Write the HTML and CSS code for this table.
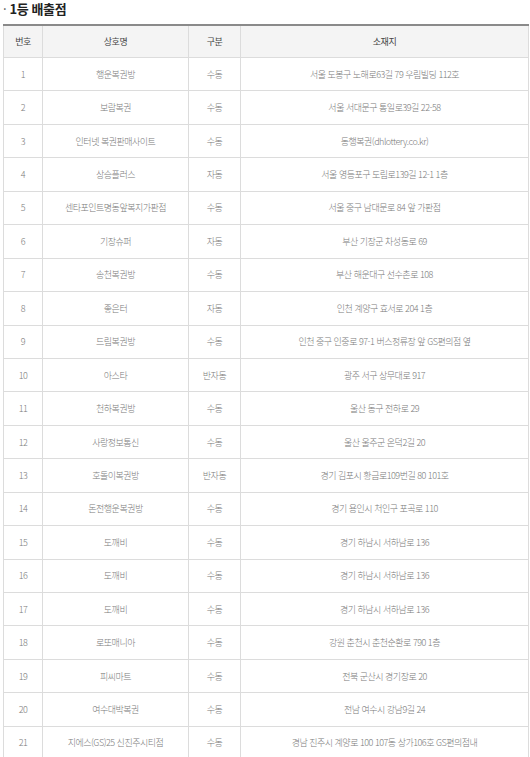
FILE: index.html
```html
<!DOCTYPE html>
<html lang="ko">
<head>
<meta charset="utf-8">
<link rel="stylesheet" href="styles.css">
</head>
<body>
<div class="wrap">
  <h3 class="title"><span class="dot">·</span> 1등 배출점</h3>
  <table class="tbl">
    <colgroup>
      <col class="c1"><col class="c2"><col class="c3"><col class="c4">
    </colgroup>
    <thead>
      <tr><th>번호</th><th>상호명</th><th>구분</th><th>소재지</th></tr>
    </thead>
    <tbody>
      <tr><td>1</td><td>행운복권방</td><td>수동</td><td>서울 도봉구 노해로63길 79 우림빌딩 112호</td></tr>
      <tr><td>2</td><td>보람복권</td><td>수동</td><td>서울 서대문구 통일로39길 22-58</td></tr>
      <tr><td>3</td><td>인터넷 복권판매사이트</td><td>수동</td><td>동행복권(dhlottery.co.kr)</td></tr>
      <tr><td>4</td><td>상승플러스</td><td>자동</td><td>서울 영등포구 도림로139길 12-1 1층</td></tr>
      <tr><td>5</td><td>센타포인트명동앞복지가판점</td><td>수동</td><td>서울 중구 남대문로 84 앞 가판점</td></tr>
      <tr><td>6</td><td>기장슈퍼</td><td>자동</td><td>부산 기장군 차성동로 69</td></tr>
      <tr><td>7</td><td>송천복권방</td><td>수동</td><td>부산 해운대구 선수촌로 108</td></tr>
      <tr><td>8</td><td>좋은터</td><td>자동</td><td>인천 계양구 효서로 204 1층</td></tr>
      <tr><td>9</td><td>드림복권방</td><td>수동</td><td>인천 중구 인중로 97-1 버스정류장 앞 GS편의점 옆</td></tr>
      <tr><td>10</td><td>아스타</td><td>반자동</td><td>광주 서구 상무대로 917</td></tr>
      <tr><td>11</td><td>천하복권방</td><td>수동</td><td>울산 동구 전하로 29</td></tr>
      <tr><td>12</td><td>사랑정보통신</td><td>수동</td><td>울산 울주군 온덕2길 20</td></tr>
      <tr><td>13</td><td>호돌이복권방</td><td>반자동</td><td>경기 김포시 황금로109번길 80 101호</td></tr>
      <tr><td>14</td><td>돈전행운복권방</td><td>수동</td><td>경기 용인시 처인구 포곡로 110</td></tr>
      <tr><td>15</td><td>도깨비</td><td>수동</td><td>경기 하남시 서하남로 136</td></tr>
      <tr><td>16</td><td>도깨비</td><td>수동</td><td>경기 하남시 서하남로 136</td></tr>
      <tr><td>17</td><td>도깨비</td><td>수동</td><td>경기 하남시 서하남로 136</td></tr>
      <tr><td>18</td><td>로또매니아</td><td>수동</td><td>강원 춘천시 춘천순환로 790 1층</td></tr>
      <tr><td>19</td><td>피씨마트</td><td>수동</td><td>전북 군산시 경기장로 20</td></tr>
      <tr><td>20</td><td>여수대박복권</td><td>수동</td><td>전남 여수시 강남9길 24</td></tr>
      <tr><td>21</td><td>지에스(GS)25 신진주시티점</td><td>수동</td><td>경남 진주시 계양로 100 107동 상가106호 GS편의점내</td></tr>
    </tbody>
  </table>
</div>
</body>
</html>
```

FILE: styles.css
```css
html, body {
  margin: 0;
  padding: 0;
  background: #fff;
}
.wrap {
  padding: 0 1px 0 3px;
  font-family: "Noto Sans CJK KR", "Noto Sans", sans-serif;
}
.title {
  margin: 0;
  height: 24px;
  line-height: 18px;
  font-size: 13px;
  letter-spacing: -0.4px;
  font-weight: 700;
  color: #222;
}
.dot {
  font-weight: 400;
  color: #555;
}
.tbl {
  width: 100%;
  border-collapse: collapse;
  table-layout: fixed;
  border-top: 2px solid #8a8a8a;
}
.c1 { width: 39px; }
.c2 { width: 146px; }
.c3 { width: 52px; }
.tbl th, .tbl td {
  border: 1px solid #dcdcdc;
  text-align: center;
  font-size: 9px;
  letter-spacing: -0.5px;
  padding: 0 2px;
  white-space: nowrap;
  overflow: hidden;
}
.tbl th {
  height: 31px;
  background: #f4f4f4;
  color: #444;
  font-weight: 400;
}
.tbl td {
  height: 32.45px;
  color: #7a7a7a;
  font-weight: 300;
}
```
